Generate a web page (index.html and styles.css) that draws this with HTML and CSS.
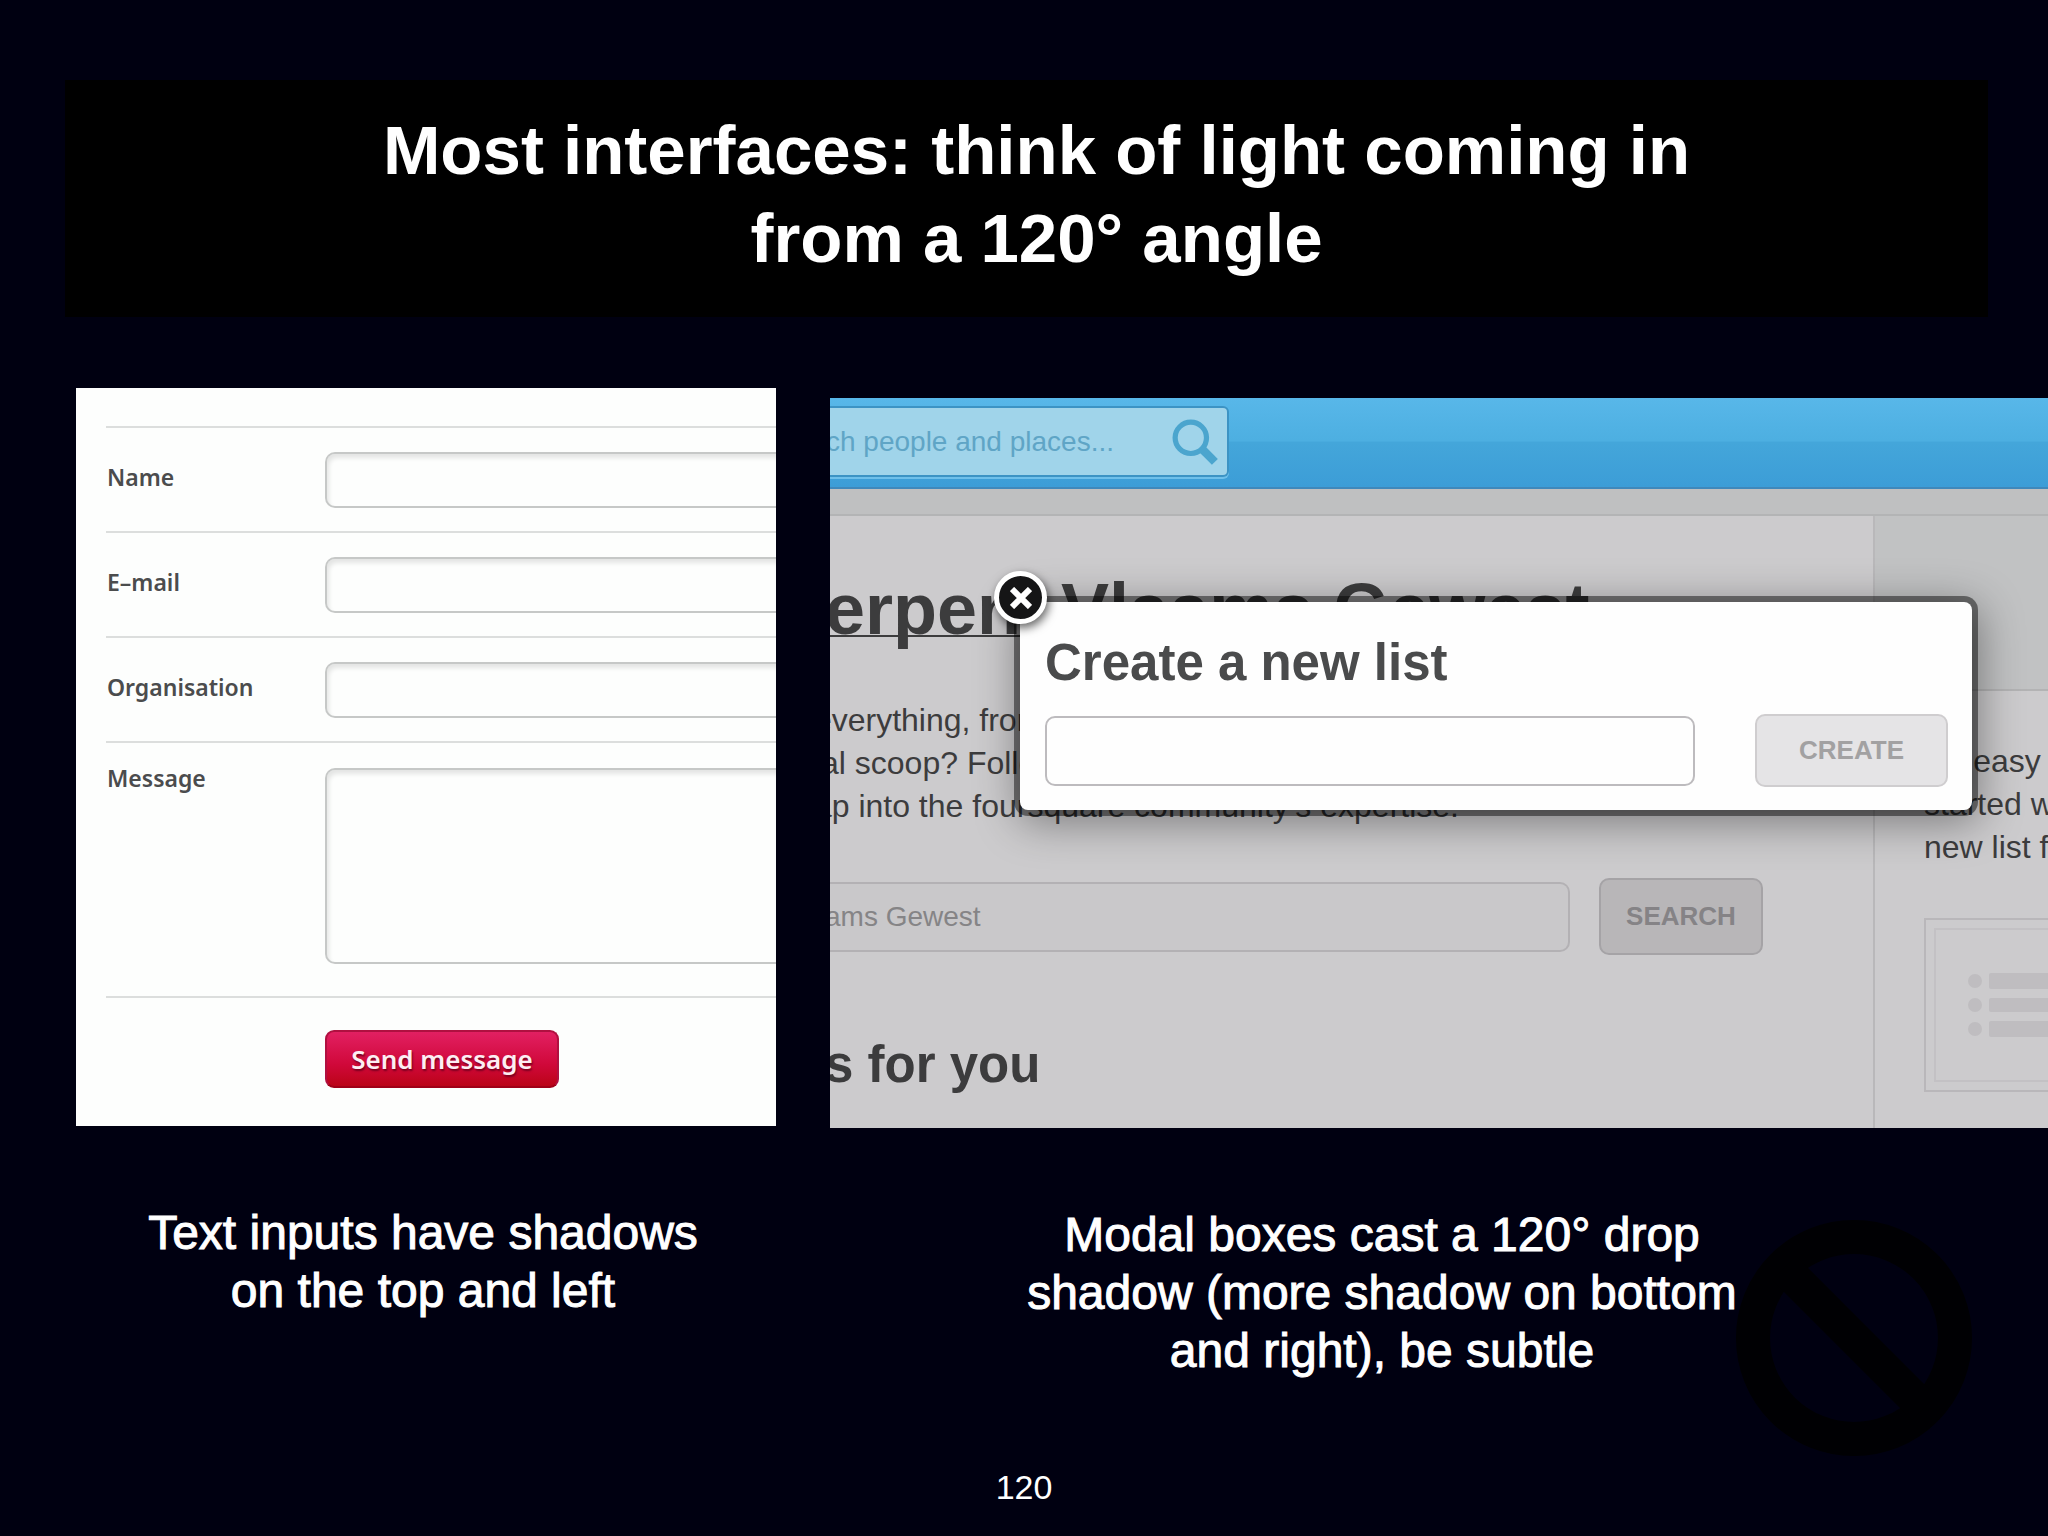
FILE: index.html
```html
<!DOCTYPE html>
<html lang="en">
<head>
<meta charset="utf-8">
<title>Light and shadow in interfaces</title>
<link rel="stylesheet" href="styles.css">
</head>
<body>
<div class="slide">
  <header class="title-bar">
    <h1 class="title">Most interfaces: think of light coming in from a 120° angle</h1>
  </header>

  <main class="examples">
    <figure class="example">
      <form class="contact">
        <div class="row">
          <label for="name">Name</label>
          <input class="field" id="name" type="text">
        </div>
        <div class="row">
          <label for="email">E–mail</label>
          <input class="field" id="email" type="text">
        </div>
        <div class="row">
          <label for="org">Organisation</label>
          <input class="field" id="org" type="text">
        </div>
        <div class="row row-message">
          <label for="message">Message</label>
          <textarea class="field field-message" id="message"></textarea>
        </div>
        <div class="row row-send">
          <button class="send" type="button">Send message</button>
        </div>
      </form>
      <figcaption class="caption">Text inputs have shadows on the top and left</figcaption>
    </figure>

    <figure class="example example-modal">
      <div class="site">
        <div class="topbar">
          <div class="search">
            <input class="search-input" type="text" aria-label="Search people and places" placeholder="ch people and places...">
            <svg class="search-icon" viewBox="0 0 44 44" aria-hidden="true">
              <circle cx="18" cy="18" r="15" fill="none" stroke="#4ba5ce" stroke-width="5"/>
              <path d="M28 28L41 41" stroke="#4ba5ce" stroke-width="8"/>
            </svg>
          </div>
        </div>
        <div class="columns">
          <section class="content">
            <h2 class="place"><a href="#">erpen</a>, Vlaams Gewest</h2>
            <p class="intro">&nbsp;everything, from<br>cal scoop? Follow<br>tap into the foursquare community’s expertise.</p>
            <div class="finder">
              <input class="finder-input" type="text" aria-label="Place" value="ams Gewest">
              <button class="finder-button" type="button">SEARCH</button>
            </div>
            <h3 class="heading">s for you</h3>
          </section>
          <aside class="side">
            <div class="side-top"></div>
            <div class="side-body">
              <p class="side-text">It’s easy<br>started with<br>new list for</p>
              <div class="card">
                <div class="card-inner">
                  <svg class="list-icon" viewBox="0 0 100 64" width="100" height="64" aria-hidden="true">
                    <g fill="#bfbdc0">
                      <circle cx="7" cy="8" r="7"/><circle cx="7" cy="32" r="7"/><circle cx="7" cy="56" r="7"/>
                      <rect x="21" y="0" width="79" height="16" rx="2"/><rect x="21" y="25" width="79" height="14" rx="2"/><rect x="21" y="48" width="79" height="16" rx="2"/>
                    </g>
                  </svg>
                </div>
              </div>
            </div>
          </aside>
        </div>
        <div class="modal" role="dialog" aria-labelledby="modal-title">
          <button class="close" type="button" aria-label="Close">
            <svg viewBox="0 0 22 22" width="22" height="22" aria-hidden="true"><path d="M2 2L20 20M20 2L2 20" stroke="#fff" stroke-width="6"/></svg>
          </button>
          <h3 class="heading modal-title" id="modal-title">Create a new list</h3>
          <div class="modal-row">
            <input class="modal-input" type="text" aria-labelledby="modal-title">
            <button class="create" type="button">CREATE</button>
          </div>
        </div>
      </div>
      <figcaption class="caption caption-modal">Modal boxes cast a 120° drop shadow (more shadow on bottom and right), be subtle</figcaption>
    </figure>
  </main>

  <svg class="no-sign" viewBox="0 0 240 240" aria-hidden="true">
    <circle cx="120" cy="120" r="101" fill="none" stroke="#000003" stroke-width="34"/>
    <path d="M50 50L190 190" stroke="#000003" stroke-width="34"/>
  </svg>
  <footer class="page-number">120</footer>
</div>
</body>
</html>
```
FILE: styles.css
```css
* {
  box-sizing: border-box;
}

body {
  margin: 0;
  background: #000011;
  color: #fff;
  font-family: "Liberation Sans", Arial, sans-serif;
}

h1, h2, h3, p, figure {
  margin: 0;
}

input, textarea, button {
  font-family: inherit;
  margin: 0;
}

.slide {
  position: relative;
  display: flex;
  flex-direction: column;
  min-height: 100vh;
  padding-top: 80px;
  overflow: hidden;
}

.title-bar {
  margin: 0 60px 0 65px;
  padding: 27px 0 34px 20px;
  background: #000;
}

.title {
  max-width: 1400px;
  margin: 0 auto;
  font-size: 69px;
  line-height: 88px;
  text-align: center;
}

.examples {
  display: grid;
  grid-template-columns: 700fr 1218fr;
  gap: 54px;
  margin-top: 71px;
  padding-left: 76px;
}

.example {
  min-width: 0;
}

.example-modal {
  padding-top: 10px;
}

.caption {
  max-width: 580px;
  margin: 78px auto 0;
  padding-right: 6px;
  font-size: 48px;
  line-height: 58px;
  text-align: center;
  -webkit-text-stroke: 1px #fff;
}

.caption-modal {
  max-width: 740px;
  margin-left: 185px;
}

/* Contact form */

.contact {
  padding: 38px 0 38px 30px;
  background: #fdfefd;
  font-family: "Noto Sans", "Open Sans", sans-serif;
}

.row {
  display: grid;
  grid-template-columns: 219px 1fr;
  align-items: center;
  height: 105px;
  border-top: 2px solid #dcdedd;
}

.row label {
  padding: 0 0 6px 1px;
  color: #4b4c4d;
  font-size: 23px;
  font-weight: 600;
  line-height: 32px;
}

.field {
  width: 100%;
  height: 56px;
  border: 2px solid #c6c8c7;
  border-right: 0;
  border-radius: 10px 0 0 10px;
  background: #fdfefd;
  box-shadow: inset 2px 4px 4px #e4e5e4;
}

.row-message {
  align-items: start;
  height: 255px;
}

.row-message label {
  padding-top: 19px;
}

.field-message {
  display: block;
  height: 196px;
  margin-top: 25px;
  resize: none;
}

.row-send {
  height: auto;
  padding-top: 32px;
}

.send {
  grid-column: 2;
  justify-self: start;
  width: 234px;
  height: 58px;
  padding: 0;
  border: 2px solid #b01040;
  border-bottom-color: #a00018;
  border-radius: 9px;
  background: linear-gradient(#e22062, #d0083a 60%, #bb0418);
  color: #fdeef3;
  font-size: 26px;
  font-weight: 600;
  text-shadow: 1px 2px 2px #7a0020;
}

/* Site behind the dialog */

.site {
  position: relative;
  overflow: hidden;
  background: #cccbcd;
  color: #3c3c3d;
}

.topbar {
  height: 91px;
  padding-top: 8px;
  border-bottom: 2px solid #3f88bb;
  background: linear-gradient(#58b7e9, #4dafe1 48%, #44a6da 50%, #3c9dd7);
}

.search {
  display: flex;
  align-items: center;
  width: 399px;
  height: 71px;
  padding-right: 9px;
  border: 2px solid #3c93c4;
  border-left: 0;
  border-radius: 0 6px 6px 0;
  background: #a0d4ea;
  box-shadow: 0 2px 0 #6fc0ea;
}

.search-input {
  flex: 1;
  min-width: 0;
  margin-left: -4px;
  padding: 0;
  border: 0;
  background: transparent;
  font-size: 28px;
}

.search-input::placeholder {
  color: #5fa5c6;
  opacity: 1;
}

.search-icon {
  width: 46px;
  height: 46px;
}

.columns {
  display: grid;
  grid-template-columns: 1fr 175px;
  border-top: 27px solid #bfc0c1;
}

.content {
  min-width: 0;
  padding: 53px 0 33px;
  box-shadow: 0 -2px 0 #b3b4b5;
}

.place {
  margin-left: -5px;
  font-size: 72px;
  line-height: 80px;
  white-space: nowrap;
}

.place a {
  color: inherit;
  text-decoration-thickness: 2px;
  text-decoration-skip-ink: none;
}

.intro, .side-text {
  font-size: 32px;
  line-height: 43px;
  white-space: nowrap;
}

.intro {
  margin: 50px 0 0 -25px;
}

.finder {
  display: flex;
  align-items: center;
  gap: 29px;
  margin-top: 50px;
}

.finder-input {
  width: 740px;
  height: 70px;
  padding: 0;
  border: 2px solid #b3b1b4;
  border-left: 0;
  border-radius: 0 10px 10px 0;
  background: #c9c8ca;
  color: #858486;
  font-size: 28px;
  text-indent: -5px;
}

.finder-button, .create {
  padding: 0;
  border-radius: 10px;
  font-size: 26px;
  font-weight: 700;
}

.finder-button {
  width: 164px;
  height: 77px;
  border: 2px solid #a5a3a6;
  background: #b8b6b8;
  color: #858386;
}

.heading {
  font-size: 51px;
  line-height: 60px;
}

.content .heading {
  margin: 80px 0 0 -5px;
}

.side {
  min-width: 0;
  border-left: 2px solid #b9b8ba;
  box-shadow: 0 -2px 0 #b3b4b5;
}

.side-top {
  height: 175px;
  border-bottom: 2px solid #b3b3b4;
  background: #c1c2c3;
}

.side-body {
  padding: 49px 0 0 49px;
}

.card {
  margin-top: 49px;
  padding: 8px 0 8px 8px;
  border: 2px solid #b9b7ba;
  border-right: 0;
}

.card-inner {
  height: 154px;
  padding: 43px 0 0 32px;
  border: 2px solid #c3c1c4;
  border-right: 0;
  overflow: hidden;
}

/* Dialog */

.modal {
  position: absolute;
  top: 204px;
  left: 190px;
  right: 76px;
  height: 208px;
  padding: 31px 24px 0 25px;
  border-radius: 8px;
  background: #fefefe;
  color: #4a4b4c;
  box-shadow: 0 0 0 6px rgba(0, 0, 0, 0.45), 3px 8px 44px 4px rgba(0, 0, 0, 0.4);
}

.modal-row {
  display: flex;
  align-items: center;
  justify-content: space-between;
  gap: 60px;
  margin-top: 21px;
}

.modal-input {
  flex: 1;
  min-width: 0;
  height: 70px;
  border: 2px solid #bdbbbe;
  border-radius: 10px;
  background: #fefefe;
}

.create {
  width: 193px;
  height: 73px;
  border: 2px solid #cfcdcf;
  background: #e5e4e6;
  color: #a2a1a2;
}

.close {
  position: absolute;
  top: -31px;
  left: -26px;
  display: flex;
  align-items: center;
  justify-content: center;
  width: 53px;
  height: 53px;
  padding: 0;
  border: 5px solid #fff;
  border-radius: 50%;
  background: #151516;
  box-shadow: 2px 4px 10px rgba(0, 0, 0, 0.6);
}

/* Slide furniture */

.no-sign {
  position: absolute;
  right: 74px;
  bottom: 78px;
  width: 240px;
  height: 240px;
}

.page-number {
  margin-top: auto;
  padding-bottom: 29px;
  font-size: 34px;
  line-height: 40px;
  text-align: center;
}
```
